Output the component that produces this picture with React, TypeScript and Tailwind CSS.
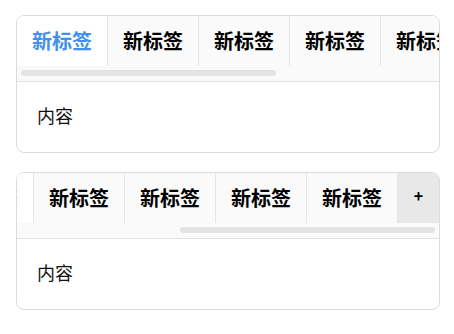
import { useLayoutEffect, useRef, useState } from "react";

const font = "font-['Noto_Sans_CJK_SC','Noto_Sans',sans-serif]";

function TabCard({
  count,
  active,
  withAdd,
  scrollEnd,
}: {
  count: number;
  active: number;
  withAdd?: boolean;
  scrollEnd?: boolean;
}) {
  const ref = useRef<HTMLDivElement>(null);
  const [thumb, setThumb] = useState({ left: 4, width: 0 });

  const measure = () => {
    const el = ref.current;
    if (!el) return;
    const track = el.clientWidth;
    setThumb({
      left: (el.scrollLeft / el.scrollWidth) * track + 4,
      width: (el.clientWidth / el.scrollWidth) * track - 8,
    });
  };

  useLayoutEffect(() => {
    if (scrollEnd && ref.current) ref.current.scrollLeft = ref.current.scrollWidth;
    measure();
  }, [scrollEnd]);

  const tabs = Array.from({ length: count }, (_, i) => i);
  return (
    <div className="w-[424px] rounded-lg border border-[#dcdcdc] bg-white overflow-hidden">
      <div className="bg-[#fafafa] border-b border-[#e2e2e2]">
        <div
          ref={ref}
          onScroll={measure}
          className="flex overflow-x-auto [scrollbar-width:none] [&::-webkit-scrollbar]:hidden"
        >
          {tabs.map((i) => (
            <div
              key={i}
              className={`shrink-0 h-[50px] px-[15px] flex items-center border-r border-[#e5e5e5] text-[20px] font-bold whitespace-nowrap ${
                i === active ? "bg-white text-[#4190ec]" : "bg-[#fafafa] text-black"
              }`}
            >
              新标签
            </div>
          ))}
          {withAdd ? (
            <div className="shrink-0 w-[41px] h-[50px] flex items-center justify-center bg-[#e8e8e8] text-[16px] font-bold text-black pb-[6px]">
              +
            </div>
          ) : (
            <div className="shrink-0 w-[41px] h-[50px]" />
          )}
        </div>
        <div className="relative h-[15px]">
          <div
            className="absolute top-1 h-[6px] rounded-full bg-[#e3e3e3]"
            style={{ left: thumb.left, width: thumb.width }}
          />
        </div>
      </div>
      <div className="h-[70px] px-5 pb-[3px] flex items-center text-[18px] text-[#111]">内容</div>
    </div>
  );
}

export default function App() {
  return (
    <div className={`${font} pl-4 pt-[15px] flex flex-col gap-[19px]`}>
      <TabCard count={7} active={0} />
      <TabCard count={7} active={2} withAdd scrollEnd />
    </div>
  );
}
